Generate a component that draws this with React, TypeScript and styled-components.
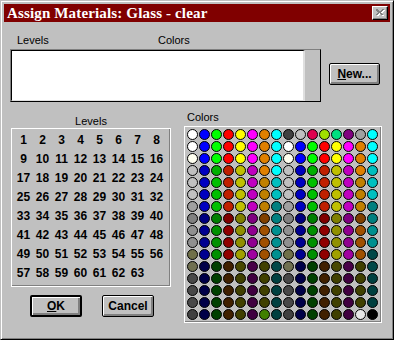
import React from 'react';
import styled, { createGlobalStyle } from 'styled-components';

const GlobalStyle = createGlobalStyle`
	body {
		margin: 0;
		background: #c0c0c0;
	}
`;

const Window = styled.div`
	box-sizing: border-box;
	width: 394px;
	height: 340px;
	padding: 3px;
	background: #c0c0c0;
	border: 1px solid;
	border-color: #c0c0c0 #000 #000 #c0c0c0;
	box-shadow: inset 1px 1px #fff, inset -1px -1px #808080;
	font-family: 'Liberation Sans', Arial, sans-serif;
	color: #000;
	display: flex;
	flex-direction: column;
`;

const TitleBar = styled.div`
	height: 18px;
	background: #800000;
	display: flex;
	align-items: flex-start;
	justify-content: space-between;
	padding: 0 2px 0 3px;
`;

const TitleText = styled.span`
	font-family: 'Liberation Serif', 'Times New Roman', serif;
	font-weight: bold;
	font-size: 15px;
	letter-spacing: 0.15px;
	line-height: 18px;
	color: #fff;
	white-space: nowrap;
`;

const CloseButton = styled.div`
	box-sizing: border-box;
	width: 16px;
	height: 14px;
	margin-top: 2px;
	background: #c0c0c0;
	border-top: 1px solid #fff;
	border-left: 1px solid #fff;
	border-right: 1px solid #000;
	border-bottom: 1px solid #000;
	box-shadow: inset -1px -1px #808080;
	display: flex;
	align-items: center;
	justify-content: center;
`;

const Label = styled.span<{ $width?: number }>`
	display: inline-block;
	font-size: 11px;
	line-height: 13px;
	width: ${(p) => (p.$width ? `${p.$width}px` : 'auto')};
	white-space: nowrap;
`;

const LabelsRow = styled.div`
	display: flex;
	margin-top: 12px;
	padding-left: 13px;
`;

const ListRow = styled.div`
	display: flex;
	align-items: flex-start;
	margin-top: 2px;
	padding-left: 6px;
`;

const ListBox = styled.div`
	box-sizing: border-box;
	width: 311px;
	height: 53px;
	display: flex;
	border: 1px solid;
	border-color: #808080 #000 #000 #808080;
`;

const ListArea = styled.div`
	flex: 1;
	background: #fff;
	border-top: 1px solid #000;
	border-left: 1px solid #000;
	border-right: 2px solid #dfdfdf;
	border-bottom: 1px solid #dfdfdf;
`;

const ScrollTrack = styled.div`
	width: 15px;
	background: #c0c0c0;
`;

const Button = styled.div<{ $default?: boolean; $w: number }>`
	box-sizing: border-box;
	width: ${(p) => p.$w}px;
	height: 22px;
	display: flex;
	align-items: center;
	justify-content: center;
	font-size: 12px;
	font-weight: bold;
	background: #c0c0c0;
	border: ${(p) => (p.$default ? 2 : 1)}px solid #000;
	border-radius: 2px;
	box-shadow: inset 1px 1px #fff, inset -1px -1px #808080, inset -2px -2px #808080;
	u {
		text-decoration-thickness: 1px;
		text-underline-offset: 1px;
	}
`;

const NewButton = styled(Button)`
	margin-left: 8px;
	margin-top: 14px;
`;

const Bottom = styled.div`
	display: flex;
	align-items: flex-start;
`;

const LevelsColumn = styled.div`
	display: flex;
	flex-direction: column;
	align-items: stretch;
	margin-left: 7px;
	padding-top: 13px;
	width: 160px;
`;

const CenteredLabel = styled(Label)`
	text-align: center;
	height: 13px;
`;

const Frame = styled.div`
	box-sizing: border-box;
	border: 1px solid #fff;
	box-shadow: inset -1px -1px #808080;
`;

const LevelsBox = styled(Frame)`
	width: 160px;
	height: 159px;
	padding: 2px;
	display: grid;
	grid-template-columns: repeat(8, 19px);
	grid-auto-rows: 19px;
	align-content: start;
`;

const LevelCell = styled.span`
	display: flex;
	align-items: center;
	justify-content: center;
	font-size: 12px;
	font-weight: bold;
	line-height: 19px;
`;

const ButtonsRow = styled.div`
	display: flex;
	gap: 20px;
	margin-top: 8px;
	padding-left: 19px;
`;

const ColorsColumn = styled.div`
	display: flex;
	flex-direction: column;
	margin-left: 13px;
	padding-top: 9px;
`;

const ColorsLabel = styled(Label)`
	padding-left: 3px;
	margin-bottom: 2px;
`;

const ColorsPanel = styled(Frame)`
	width: 198px;
	height: 197px;
	padding: 2px 0 0 2px;
	display: grid;
	grid-template-columns: repeat(16, 12px);
	grid-auto-rows: 12px;
	align-content: start;
`;

const Swatch = styled.span<{ $c: string }>`
	box-sizing: border-box;
	width: 11px;
	height: 11px;
	border-radius: 50%;
	border: 1px solid #000;
	background: ${(p) => p.$c};
`;

const twice = (a: string[]) => [...a, ...a];

const rowA = twice(['#fffff0', '#0000ff', '#00ff00', '#ff0000', '#ffff00', '#ff00ff', '#e08000', '#00ffff']);
const rowB = twice(['#c0c0c0', '#0000c0', '#00c000', '#c02000', '#c0c000', '#c000c0', '#c08000', '#00c0c0']);
const rowC = twice(['#909090', '#000090', '#009000', '#900000', '#909000', '#900090', '#a05000', '#009090']);
const rowD = twice(['#484848', '#000048', '#004000', '#402000', '#404000', '#400040', '#404000', '#004040']);

const COLORS: string[][] = [
	['#ffffff', '#0000ff', '#00ff00', '#ff0000', '#ffff00', '#ff00ff', '#e08000', '#00ffff',
		'#404040', '#c0c0c0', '#e00050', '#a0e000', '#00e080', '#800080', '#a0a0a0', '#00ffff'],
	['#ffffff', ...rowA.slice(1, 8), '#ffffff', ...rowA.slice(9)],
	rowA,
	['#c0c0c0', '#0000c0', '#00b000', '#c02000', '#c0c000', '#c000c0', '#e08000', '#00ffff',
		'#c0c0c0', '#0000c0', '#00b000', '#c02000', '#c0c000', '#c000c0', '#e08000', '#00c0c0'],
	rowB,
	rowB,
	twice(['#a0a0a0', '#0000c0', '#00c000', '#c02000', '#c0c000', '#c000c0', '#c08000', '#008080']),
	twice(['#808080', '#000080', '#008000', '#800000', '#808000', '#800080', '#804000', '#008080']),
	rowC,
	rowC,
	['#707048', '#000090', '#009000', '#900000', '#a0a000', '#a000a0', '#a05000', '#009090',
		'#707048', '#000090', '#009000', '#900000', '#a0a000', '#a000a0', '#a05000', '#004848'],
	twice(['#707050', '#000048', '#004000', '#402000', '#484800', '#480048', '#404000', '#004848']),
	rowD,
	rowD,
	rowD,
	['#404040', '#000048', '#004000', '#402000', '#404000', '#400040', '#408000', '#004040',
		'#404040', '#000048', '#004000', '#402000', '#404000', '#400040', '#e8e8e8', '#000000'],
];

const LEVELS = Array.from({ length: 63 }, (_, i) => i + 1);

function CloseGlyph() {
	// greyed-out X, with the white etch offset by a pixel
	return (
		<svg width="9" height="8" viewBox="0 0 9 8" shapeRendering="crispEdges">
			<path d="M1 1h2v1h1v1h2v-1h1v-1h2v1h-1v1h-1v1h-1v1h1v1h1v1h-2v-1h-1v-1h-1v1h-1v1h-2v-1h1v-1h1v-1h-1v-1h-1z" fill="#fff" />
			<path d="M0 0h2v1h1v1h2v-1h1v-1h2v1h-1v1h-1v1h-1v1h1v1h1v1h-2v-1h-1v-1h-1v1h-1v1h-2v-1h1v-1h1v-1h-1v-1h-1z" fill="#808080" />
		</svg>
	);
}

export default function App() {
	return (
		<>
			<GlobalStyle />
			<Window>
				<TitleBar>
					<TitleText>Assign Materials: Glass - clear</TitleText>
					<CloseButton>
						<CloseGlyph />
					</CloseButton>
				</TitleBar>

				<LabelsRow>
					<Label $width={141}>Levels</Label>
					<Label>Colors</Label>
				</LabelsRow>

				<ListRow>
					<ListBox>
						<ListArea />
						<ScrollTrack />
					</ListBox>
					<NewButton $w={51}>
						<span>
							<u>N</u>ew...
						</span>
					</NewButton>
				</ListRow>

				<Bottom>
					<LevelsColumn>
						<CenteredLabel>Levels</CenteredLabel>
						<LevelsBox>
							{LEVELS.map((n) => (
								<LevelCell key={n}>{n}</LevelCell>
							))}
						</LevelsBox>
						<ButtonsRow>
							<Button $default $w={52}>
								<span>
									<u>O</u>K
								</span>
							</Button>
							<Button $w={52}>Cancel</Button>
						</ButtonsRow>
					</LevelsColumn>

					<ColorsColumn>
						<ColorsLabel>Colors</ColorsLabel>
						<ColorsPanel>
							{COLORS.flatMap((row, r) =>
								row.map((c, i) => <Swatch key={`${r}-${i}`} $c={c} />)
							)}
						</ColorsPanel>
					</ColorsColumn>
				</Bottom>
			</Window>
		</>
	);
}
